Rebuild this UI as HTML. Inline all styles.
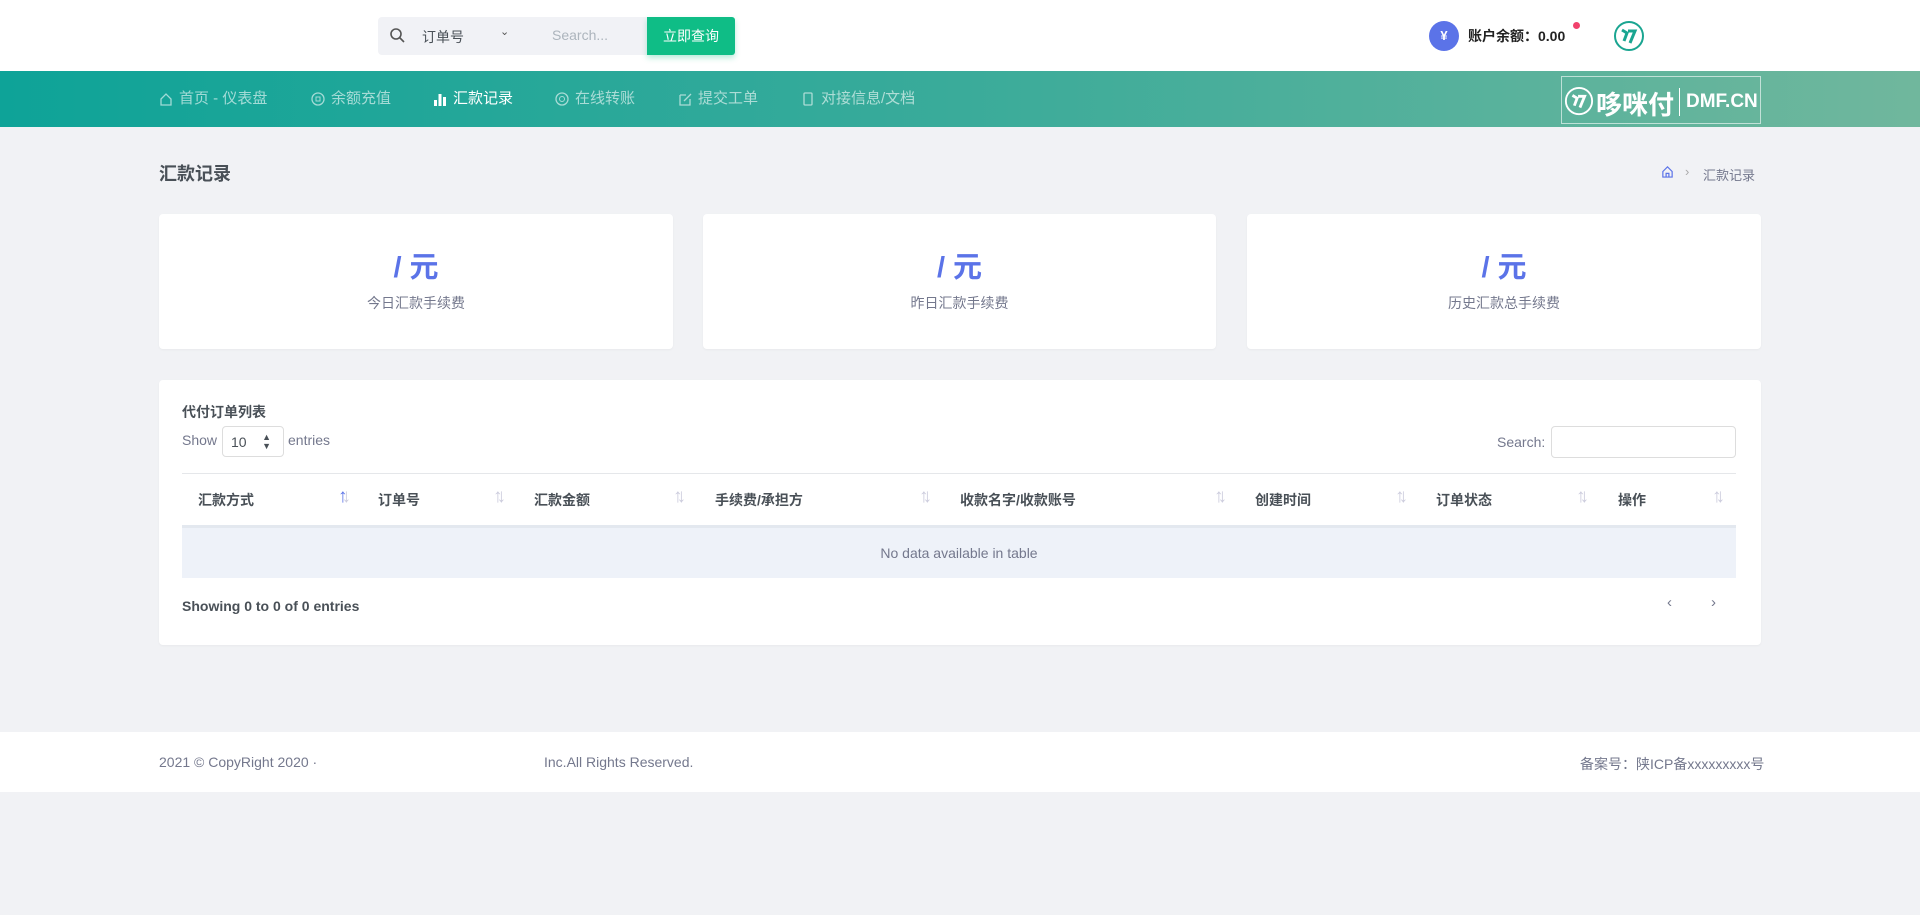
<!DOCTYPE html>
<html><head><meta charset="utf-8"><style>
*{box-sizing:border-box;margin:0;padding:0}
body{width:1920px;height:915px;background:#f1f2f5;font-family:"Liberation Sans","Noto Sans CJK SC",sans-serif;position:relative;overflow:hidden;color:#495057}
.abs{position:absolute}
#top{left:0;top:0;width:1920px;height:71px;background:#fff}
#nav{left:0;top:71px;width:1920px;height:56px;background:linear-gradient(90deg,#0ea398 0%,#3aab9a 50%,#70b79d 100%)}
.ni{position:absolute;top:0;height:56px;line-height:56px;font-size:15px;color:rgba(255,255,255,.6);display:flex;align-items:center;gap:6px}
.ni svg{width:14px;height:14px}
.card{position:absolute;background:#fff;border-radius:4px;box-shadow:0 1px 2px rgba(0,0,0,.04)}
.big{position:absolute;width:100%;text-align:center;top:30px;font-size:29px;font-weight:bold;color:#5b73e8}
.lbl{position:absolute;width:100%;text-align:center;top:79px;font-size:14px;color:#74788d}
.th{position:absolute;top:490px;font-size:14px;font-weight:bold;color:#495057}
.ar{position:absolute;top:486px;font-size:19px;color:#ccd;letter-spacing:-6px}
</style></head><body>
<div id="top" class="abs"></div>
<div class="abs" style="left:378px;top:17px;width:270px;height:38px;background:#f1f2f6;border-radius:4px 0 0 4px"></div>
<svg class="abs" style="left:389px;top:27px" width="16" height="16" viewBox="0 0 16 16"><circle cx="7" cy="7" r="5" fill="none" stroke="#555" stroke-width="1.6"/><path d="M11 11l4 4" stroke="#555" stroke-width="1.6"/></svg>
<div class="abs" style="left:422px;top:27px;font-size:14px;color:#495057">订单号</div>
<div class="abs" style="left:500px;top:25px;font-size:11px;color:#555">⌄</div>
<div class="abs" style="left:552px;top:27px;font-size:14px;color:#adb5bd">Search...</div>
<div class="abs" style="left:647px;top:17px;width:88px;height:38px;background:#0fbd86;border-radius:0 3px 3px 0;color:#fff;font-size:14px;text-align:center;line-height:38px;box-shadow:0 3px 6px rgba(15,189,134,.3)">立即查询</div>
<div class="abs" style="left:1429px;top:21px;width:30px;height:30px;border-radius:50%;background:#5b73e8;color:#fff;font-size:13px;font-weight:bold;text-align:center;line-height:30px">¥</div>
<div class="abs" style="left:1468px;top:26px;font-size:14px;color:#222;font-weight:bold">账户余额：0.00</div>
<div class="abs" style="left:1573px;top:22px;width:7px;height:7px;border-radius:50%;background:#f1416c"></div>
<svg class="abs" style="left:1613px;top:20px" width="32" height="32" viewBox="0 0 32 32"><circle cx="16" cy="16" r="14" fill="none" stroke="#1aa591" stroke-width="2"/><path d="M9 10l5 3-3 8M15 11h7l-5 12" stroke="#1aa591" stroke-width="3" fill="none"/></svg>
<div id="nav" class="abs">
<div class="ni" style="left:159px"><svg viewBox="0 0 14 14"><path d="M2 7L7 2l5 5v6H2z" fill="none" stroke="currentColor" stroke-width="1.3"/></svg>首页 - 仪表盘</div>
<div class="ni" style="left:311px"><svg viewBox="0 0 14 14"><circle cx="7" cy="7" r="6" fill="none" stroke="currentColor" stroke-width="1.3"/><rect x="5" y="5" width="4" height="4" fill="none" stroke="currentColor"/></svg>余额充值</div>
<div class="ni" style="left:433px;color:#fff"><svg viewBox="0 0 14 14"><rect x="1" y="8" width="3" height="6" fill="#fff"/><rect x="5.5" y="2" width="3" height="12" fill="#fff"/><rect x="10" y="5" width="3" height="9" fill="#fff"/></svg>汇款记录</div>
<div class="ni" style="left:555px"><svg viewBox="0 0 14 14"><circle cx="7" cy="7" r="6" fill="none" stroke="currentColor" stroke-width="1.3"/><circle cx="7" cy="7" r="2.5" fill="none" stroke="currentColor"/></svg>在线转账</div>
<div class="ni" style="left:678px"><svg viewBox="0 0 14 14"><path d="M2 3h6M2 3v10h10V7M6 9l7-7" fill="none" stroke="currentColor" stroke-width="1.3"/></svg>提交工单</div>
<div class="ni" style="left:801px"><svg viewBox="0 0 14 14"><rect x="3" y="1" width="8" height="12" rx="1" fill="none" stroke="currentColor" stroke-width="1.3"/></svg>对接信息/文档</div>
</div>
<div class="abs" style="left:1561px;top:76px;width:200px;height:48px;border:1px solid rgba(255,255,255,.6)"></div>
<svg class="abs" style="left:1564px;top:86px" width="30" height="30" viewBox="0 0 32 32"><circle cx="16" cy="16" r="14" fill="none" stroke="#fff" stroke-width="2"/><path d="M9 10l5 3-3 8M15 11h7l-5 12" stroke="#fff" stroke-width="3" fill="none"/></svg>
<div class="abs" style="left:1596px;top:85px;font-size:26px;font-weight:bold;color:#fff">哆咪付</div>
<div class="abs" style="left:1679px;top:88px;width:1px;height:28px;background:#fff"></div>
<div class="abs" style="left:1686px;top:91px;font-size:19px;font-weight:bold;color:#fff">DMF.CN</div>
<div class="abs" style="left:159px;top:160px;font-size:18px;font-weight:bold;color:#495057">汇款记录</div>
<svg class="abs" style="left:1661px;top:165px" width="13" height="13" viewBox="0 0 14 14"><path d="M2 7L7 2l5 5v6H2zM5.5 13V9h3v4" fill="none" stroke="#5b73e8" stroke-width="1.3"/></svg>
<div class="abs" style="left:1685px;top:164px;font-size:13px;color:#aaa">›</div>
<div class="abs" style="left:1703px;top:165px;font-size:13px;color:#74788d">汇款记录</div>
<div class="card" style="left:159px;top:214px;width:514px;height:135px"><div class="big">/ 元</div><div class="lbl">今日汇款手续费</div></div>
<div class="card" style="left:703px;top:214px;width:513px;height:135px"><div class="big">/ 元</div><div class="lbl">昨日汇款手续费</div></div>
<div class="card" style="left:1247px;top:214px;width:514px;height:135px"><div class="big">/ 元</div><div class="lbl">历史汇款总手续费</div></div>
<div class="card" style="left:159px;top:380px;width:1602px;height:265px"></div>
<div class="abs" style="left:182px;top:402px;font-size:14px;font-weight:bold;color:#495057">代付订单列表</div>
<div class="abs" style="left:182px;top:432px;font-size:14px;color:#74788d">Show</div>
<div class="abs" style="left:222px;top:426px;width:62px;height:31px;border:1px solid #ddd;border-radius:4px;font-size:14px;padding:7px 0 0 8px;color:#495057">10<span style="position:absolute;right:12px;top:6px;font-size:9px;line-height:9px">▲<br>▼</span></div>
<div class="abs" style="left:288px;top:432px;font-size:14px;color:#74788d">entries</div>
<div class="abs" style="left:1497px;top:434px;font-size:14px;color:#74788d">Search:</div>
<div class="abs" style="left:1551px;top:426px;width:185px;height:32px;border:1px solid #ddd;border-radius:4px"></div>
<div class="abs" style="left:182px;top:473px;width:1554px;height:1px;background:#e5e7ea"></div>
<div class="th" style="left:198px">汇款方式</div><div class="ar" style="left:338px"><span style="color:#5b73e8">↑</span>↓</div>
<div class="th" style="left:378px">订单号</div><div class="ar" style="left:493px">↑↓</div>
<div class="th" style="left:534px">汇款金额</div><div class="ar" style="left:673px">↑↓</div>
<div class="th" style="left:715px">手续费/承担方</div><div class="ar" style="left:919px">↑↓</div>
<div class="th" style="left:960px">收款名字/收款账号</div><div class="ar" style="left:1214px">↑↓</div>
<div class="th" style="left:1255px">创建时间</div><div class="ar" style="left:1395px">↑↓</div>
<div class="th" style="left:1436px">订单状态</div><div class="ar" style="left:1576px">↑↓</div>
<div class="th" style="left:1618px">操作</div><div class="ar" style="left:1712px">↑↓</div>
<div class="abs" style="left:182px;top:525px;width:1554px;height:53px;background:#eef2f9;border-top:3px solid #e3e8ef;text-align:center;line-height:50px;font-size:14px;color:#74788d">No data available in table</div>
<div class="abs" style="left:182px;top:598px;font-size:14px;font-weight:bold;color:#495057">Showing 0 to 0 of 0 entries</div>
<div class="abs" style="left:1667px;top:594px;font-size:15px;color:#74788d">‹</div>
<div class="abs" style="left:1711px;top:594px;font-size:15px;color:#74788d">›</div>
<div class="abs" style="left:0;top:732px;width:1920px;height:60px;background:#fff"></div>
<div class="abs" style="left:159px;top:754px;font-size:14px;color:#74788d">2021 © CopyRight 2020 ·</div>
<div class="abs" style="left:544px;top:754px;font-size:14px;color:#74788d">Inc.All Rights Reserved.</div>
<div class="abs" style="left:1580px;top:754px;font-size:14px;color:#74788d">备案号：陕ICP备xxxxxxxxx号</div>
</body></html>
